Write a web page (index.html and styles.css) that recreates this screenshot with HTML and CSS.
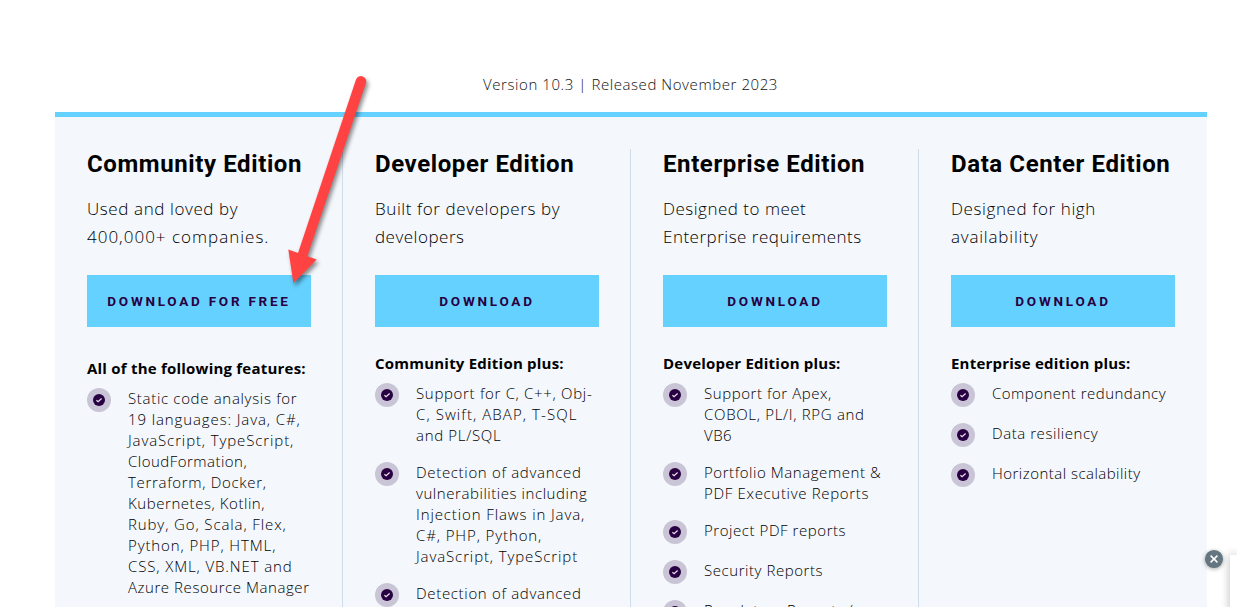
FILE: index.html
```html
<!DOCTYPE html>
<html lang="en">
<head>
<meta charset="utf-8">
<title>Download</title>
<link rel="stylesheet" href="styles.css">
</head>
<body>
<svg width="0" height="0" class="defs"><symbol id="check" viewBox="0 0 24 24"><circle cx="12" cy="12" r="12" fill="#cac5d6"/><circle cx="12" cy="12" r="6" fill="#290042"/><path d="M9.4 12.3l1.7 1.5 3.5-3.3" fill="none" stroke="#e8e4ee" stroke-width="1.2"/></symbol></svg>
<p class="version">Version 10.3 | Released November 2023</p>
<main class="panel">
  <section class="edition">
    <h2>Community Edition</h2>
    <p class="desc"><span class="s2">Used and loved by</span><span class="s5">400,000+ companies.</span></p>
    <a class="button">DOWNLOAD FOR FREE</a>
    <h3 class="lower">All of the following features:</h3>
    <ul>
      <li><svg class="icon"><use href="#check"/></svg><div><span class="s3">Static code analysis for</span><span class="s4">19 languages: Java, C#,</span><span class="s4">JavaScript, TypeScript,</span><span class="s1">CloudFormation,</span><span class="s3">Terraform, Docker,</span><span class="s2">Kubernetes, Kotlin,</span><span class="s4">Ruby, Go, Scala, Flex,</span><span class="s4">Python, PHP, HTML,</span><span class="s4">CSS, XML, VB.NET and</span><span class="s2">Azure Resource Manager</span></div></li>
    </ul>
  </section>
  <section class="edition">
    <h2>Developer Edition</h2>
    <p class="desc"><span class="s2">Built for developers by</span><span class="s1">developers</span></p>
    <a class="button">DOWNLOAD</a>
    <h3>Community Edition plus:</h3>
    <ul>
      <li><svg class="icon"><use href="#check"/></svg><div><span class="s3">Support for C, C++, Obj-</span><span class="s5">C, Swift, ABAP, T-SQL</span><span class="s3">and PL/SQL</span></div></li>
      <li><svg class="icon"><use href="#check"/></svg><div><span class="s3">Detection of advanced</span><span class="s2">vulnerabilities including</span><span class="s4">Injection Flaws in Java,</span><span class="s4">C#, PHP, Python,</span><span class="s4">JavaScript, TypeScript</span></div></li>
      <li><svg class="icon"><use href="#check"/></svg><div><span class="s3">Detection of advanced</span></div></li>
    </ul>
  </section>
  <section class="edition">
    <h2>Enterprise Edition</h2>
    <p class="desc"><span class="s1">Designed to meet</span><span class="s1">Enterprise requirements</span></p>
    <a class="button">DOWNLOAD</a>
    <h3>Developer Edition plus:</h3>
    <ul>
      <li><svg class="icon"><use href="#check"/></svg><div><span class="s2">Support for Apex,</span><span class="s3">COBOL, PL/I, RPG and</span><span class="s1">VB6</span></div></li>
      <li><svg class="icon"><use href="#check"/></svg><div><span class="s2">Portfolio Management &amp;</span><span class="s3">PDF Executive Reports</span></div></li>
      <li><svg class="icon"><use href="#check"/></svg><div><span class="s2">Project PDF reports</span></div></li>
      <li><svg class="icon"><use href="#check"/></svg><div><span class="s2">Security Reports</span></div></li>
      <li><svg class="icon"><use href="#check"/></svg><div><span class="s3">Regulatory Reports (</span></div></li>
    </ul>
  </section>
  <section class="edition">
    <h2>Data Center Edition</h2>
    <p class="desc"><span class="s2">Designed for high</span><span class="s3">availability</span></p>
    <a class="button">DOWNLOAD</a>
    <h3>Enterprise edition plus:</h3>
    <ul>
      <li><svg class="icon"><use href="#check"/></svg><div><span class="s1">Component redundancy</span></div></li>
      <li><svg class="icon"><use href="#check"/></svg><div><span class="s2">Data resiliency</span></div></li>
      <li><svg class="icon"><use href="#check"/></svg><div><span class="s1">Horizontal scalability</span></div></li>
    </ul>
  </section>
</main>
<svg class="arrow" viewBox="270 60 120 240"><path d="M356 79.5A5.3 5.3 0 0 1 366 83L307.3 256.2L316.7 259.5L293.4 283.3L288.3 249.5L298 252.9Z" fill="#ff4343"/></svg>
<div class="dock"><div class="drawer"></div></div>
<svg class="close" viewBox="0 0 20 20"><circle cx="10" cy="10" r="9.1" fill="#657680"/><path d="M6.6 6.6l6.8 6.8m0-6.8l-6.8 6.8" stroke="#fff" stroke-width="1.5"/></svg>
</body>
</html>
```
FILE: styles.css
```css
* { box-sizing: border-box; }
html { overflow: hidden; }
body { margin: 0; height: 607px; overflow: hidden; position: relative; background: #fff; color: #000; font-family: "Open Sans", "Noto Sans", sans-serif; }
.defs { position: absolute; }
h2, h3, p, ul { margin: 0; padding: 0; white-space: nowrap; }
.version { height: 112px; padding: 72px 0 0 24px; text-align: center; font-size: 15px; line-height: 24px; font-weight: 300; letter-spacing: .57px; color: #111; }
.panel { width: 1152px; height: 495px; margin-left: 55px; padding-top: 32px; display: flex; background: #f4f7fc; border-top: 5px solid #65d1ff; overflow: hidden; }
.edition { width: 288px; height: 458px; padding: 0 31px 0 32px; border-right: 1px solid #cfdcec; }
.edition:last-child { border-right: 0; padding-right: 32px; }
h2 { font-family: Roboto, sans-serif; font-size: 24px; line-height: 30px; font-weight: 700; letter-spacing: .6px; }
.desc { --track: .5px; margin-top: 16px; height: 56px; font-size: 17px; line-height: 28px; font-weight: 300; }
.desc span, li span { display: block; letter-spacing: var(--track); }
.button { margin-top: 24px; height: 52px; width: 224px; display: flex; align-items: center; justify-content: center; background: #65d1ff; color: #290042; font-family: Roboto, sans-serif; font-size: 13.5px; font-weight: 700; letter-spacing: 2.75px; white-space: nowrap; }
h3 { margin-top: 24px; height: 24px; font-size: 15px; line-height: 24px; font-weight: 700; letter-spacing: .22px; }
.lower { margin-top: 29px; }
ul { margin-top: 8px; display: grid; gap: 16px; list-style: none; }
li { --track: .35px; min-height: 24px; display: flex; gap: 17px; font-size: 15px; line-height: 21px; font-weight: 300; }
li .s1 { letter-spacing: .48px; }
.desc .s2 { letter-spacing: .6px; }
li .s2 { letter-spacing: .56px; }
.desc .s3 { letter-spacing: .8px; }
li .s3 { letter-spacing: .68px; }
li .s4 { letter-spacing: .89px; }
.desc .s5 { letter-spacing: 1px; }
li .s5 { letter-spacing: 1.08px; }
.icon { width: 24px; height: 24px; flex: none; }
.arrow { position: absolute; left: 270px; top: 60px; width: 120px; height: 240px; filter: drop-shadow(2px 3px 2px rgba(0,0,0,.45)); }
.dock { position: absolute; right: 0; bottom: 0; width: 22px; height: 66px; overflow: hidden; }
.drawer { margin: 14px 0 0 15px; height: 60px; background: #fff; box-shadow: 0 0 10px rgba(0,0,0,.3); }
.close { position: absolute; left: 1204px; top: 549px; width: 20px; height: 20px; filter: drop-shadow(0 1px 2px rgba(0,0,0,.35)); }
```
